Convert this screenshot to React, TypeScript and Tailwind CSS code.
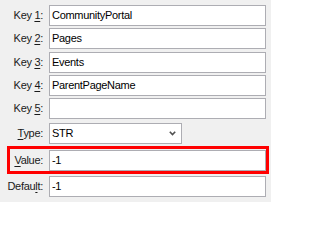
import React from "react";

function Label({ pre, u, post, w = "w-[43px]" }: { pre: string; u: string; post: string; w?: string }) {
  return (
    <div className={`${w} shrink-0 text-right text-[#1a1a1a] whitespace-nowrap`}>
      {pre}
      <span className="underline underline-offset-[2px]">{u}</span>
      {post}
    </div>
  );
}

function Box({ value }: { value: string }) {
  return (
    <div className="ml-[6px] w-[217px] h-[21px] shrink-0 border border-[#adadb3] bg-white pl-[2px] flex items-center text-black whitespace-nowrap">
      {value}
    </div>
  );
}

export default function App() {
  return (
    <div className="w-[271px] h-[202px] bg-[#f0f0f0] pt-[5px] font-['Liberation_Sans',Arial,sans-serif] text-[11px] tracking-[-0.3px] leading-none overflow-hidden">
      <div className="flex items-center h-[21px]">
        <Label pre="Key " u="1" post=":" />
        <Box value="CommunityPortal" />
      </div>
      <div className="flex items-center h-[21px] mt-[2px]">
        <Label pre="Key " u="2" post=":" />
        <Box value="Pages" />
      </div>
      <div className="flex items-center h-[21px] mt-[3px]">
        <Label pre="Key " u="3" post=":" />
        <Box value="Events" />
      </div>
      <div className="flex items-center h-[21px] mt-[2px]">
        <Label pre="Key " u="4" post=":" />
        <Box value="ParentPageName" />
      </div>
      <div className="flex items-center h-[21px] mt-[2px]">
        <Label pre="Key " u="5" post=":" />
        <Box value="" />
      </div>
      <div className="flex items-center h-[21px] mt-[4px]">
        <Label pre="" u="T" post="ype:" />
        <div className="ml-[6px] w-[133px] h-[21px] shrink-0 border border-[#adadb3] bg-white pl-[2px] pr-[5px] flex items-center justify-between text-black">
          <span>STR</span>
          <svg width="7" height="5" viewBox="0 0 7 5" className="block">
            <path d="M0.8 0.8 L3.5 3.6 L6.2 0.8" fill="none" stroke="#505050" strokeWidth="1.6" />
          </svg>
        </div>
      </div>
      <div className="ml-[7px] mt-[2px] w-[262px] h-[28px] border-[3px] border-[#ff0000] flex items-start pt-[1px]">
        <div className="flex items-center h-[21px]">
          <Label pre="" u="V" post="alue:" w="w-[33px]" />
          <Box value="-1" />
        </div>
      </div>
      <div className="flex items-center h-[21px] mt-[2px]">
        <Label pre="Defau" u="l" post="t:" />
        <Box value="-1" />
      </div>
    </div>
  );
}
